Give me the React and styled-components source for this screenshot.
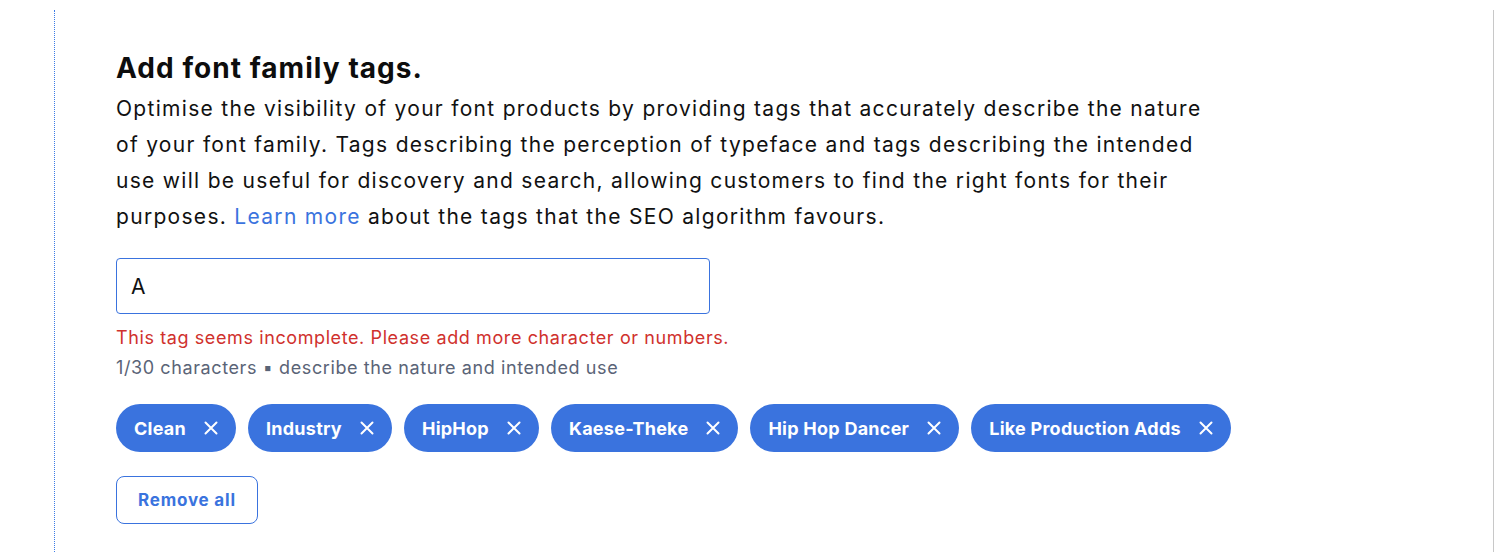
import React from "react";
import styled, { createGlobalStyle } from "styled-components";

const Global = createGlobalStyle`
  html, body { margin: 0; padding: 0; background: #fff; }
  body { font-family: Inter, "Noto Sans", sans-serif; color: #111; }
  * { box-sizing: border-box; }
`;

const Page = styled.div`
  width: 1494px;
  height: 552px;
  padding-top: 10px;
  overflow: hidden;
`;

const Frame = styled.div`
  margin-left: 54px;
  height: 100%;
  border-left: 1px dotted #3b7be6;
  border-right: 1px solid #c8c8c8;
  padding: 41px 0 0 61px;
`;

const Title = styled.h2`
  margin: 0;
  font-size: 28px;
  line-height: 34px;
  font-weight: 700;
  letter-spacing: 1.05px;
  color: #0d0d0d;
`;

const Lead = styled.p`
  margin: 6px 0 0;
  width: 1110px;
  font-size: 21px;
  line-height: 36px;
  font-weight: 400;
  letter-spacing: 1.3px;
  color: #111;
`;

const Link = styled.a`
  color: #3a73de;
  text-decoration: none;
`;

const Input = styled.input`
  display: block;
  margin-top: 23px;
  width: 594px;
  height: 56px;
  border: 1px solid #3a73de;
  border-radius: 4px;
  padding: 0 14px;
  font-family: Inter, sans-serif;
  font-size: 21px;
  color: #111;
  outline: none;
`;

const Error = styled.div`
  margin-top: 13px;
  font-size: 18px;
  line-height: 22px;
  letter-spacing: 0.6px;
  color: #d0312d;
`;

const Hint = styled.div`
  margin-top: 8px;
  font-size: 18px;
  line-height: 22px;
  letter-spacing: 0.6px;
  color: #5a6477;
`;

const Tags = styled.div`
  display: flex;
  gap: 12px;
  margin-top: 25px;
`;

const Tag = styled.div`
  display: inline-flex;
  align-items: center;
  height: 48px;
  padding: 0 18px;
  border-radius: 24px;
  background: #3a73de;
  color: #fff;
  font-size: 18px;
  font-weight: 700;
  letter-spacing: 0.25px;
  gap: 18px;
  white-space: nowrap;
`;

const Close = styled.svg`
  width: 14px;
  height: 14px;
  flex: none;
`;

const RemoveAll = styled.button`
  display: block;
  margin-top: 24px;
  height: 48px;
  padding: 0 21px;
  border: 1px solid #3a73de;
  border-radius: 8px;
  background: #fff;
  color: #3a73de;
  font-family: Inter, sans-serif;
  font-size: 17px;
  font-weight: 700;
  letter-spacing: 0.8px;
`;

const tags = ["Clean", "Industry", "HipHop", "Kaese-Theke", "Hip Hop Dancer", "Like Production Adds"];

export default function App() {
  return (
    <Page>
      <Global />
      <Frame>
        <Title>Add font family tags.</Title>
        <Lead>
          Optimise the visibility of your font products by providing tags that accurately describe the nature of your font family. Tags describing the perception of typeface and tags describing the intended use will be useful for discovery and search, allowing customers to find the right fonts for their purposes. <Link href="#">Learn more</Link> about the tags that the SEO algorithm favours.
        </Lead>
        <Input defaultValue="A" />
        <Error>This tag seems incomplete. Please add more character or numbers.</Error>
        <Hint>1/30 characters ▪ describe the nature and intended use</Hint>
        <Tags>
          {tags.map((t) => (
            <Tag key={t}>
              {t}
              <Close viewBox="0 0 14 14">
                <path d="M1.5 1.5 L12.5 12.5 M12.5 1.5 L1.5 12.5" stroke="#fff" strokeWidth="2" strokeLinecap="round" />
              </Close>
            </Tag>
          ))}
        </Tags>
        <RemoveAll>Remove all</RemoveAll>
      </Frame>
    </Page>
  );
}
